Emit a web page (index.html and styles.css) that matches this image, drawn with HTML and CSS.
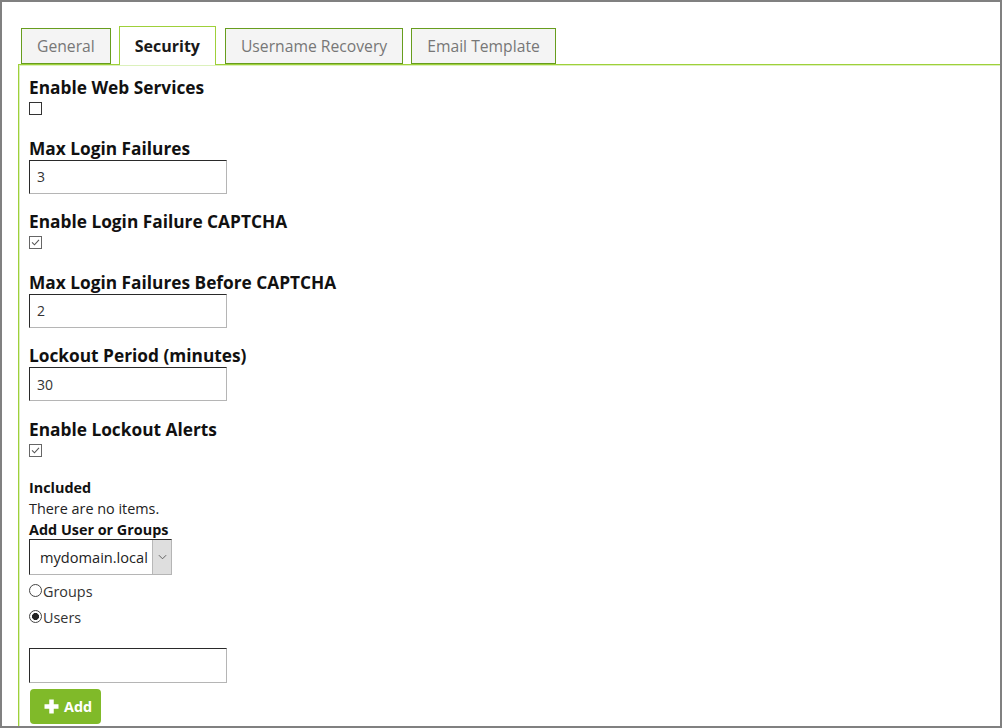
FILE: index.html
```html
<!DOCTYPE html>
<html lang="en">
<head>
<meta charset="utf-8">
<title>Security Settings</title>
<link rel="stylesheet" href="styles.css">
</head>
<body>
<div class="frame">
  <nav class="tabs">
    <a class="tab">General</a>
    <a class="tab active">Security</a>
    <a class="tab">Username Recovery</a>
    <a class="tab">Email Template</a>
  </nav>
  <div class="panel">
    <div class="field">
      <label class="label">Enable Web Services</label>
      <span class="check"></span>
    </div>
    <div class="field">
      <label class="label">Max Login Failures</label>
      <input class="text" type="text" value="3">
    </div>
    <div class="field">
      <label class="label">Enable Login Failure CAPTCHA</label>
      <span class="check checked"><svg viewBox="0 0 13 13"><path d="M2.4 6.4 L5.3 9.2 L10.6 3.3"/></svg></span>
    </div>
    <div class="field">
      <label class="label">Max Login Failures Before CAPTCHA</label>
      <input class="text" type="text" value="2">
    </div>
    <div class="field">
      <label class="label">Lockout Period (minutes)</label>
      <input class="text" type="text" value="30">
    </div>
    <div class="field">
      <label class="label">Enable Lockout Alerts</label>
      <span class="check checked"><svg viewBox="0 0 13 13"><path d="M2.4 6.4 L5.3 9.2 L10.6 3.3"/></svg></span>
    </div>
    <div class="members">
      <div class="small-bold">Included</div>
      <div class="small">There are no items.</div>
      <div class="small-bold">Add User or Groups</div>
      <div class="select">
        <select class="select-input"><option>mydomain.local</option></select>
        <span class="select-arrow"><svg viewBox="0 0 10 6"><path d="M1 1 L5 5 L9 1"/></svg></span>
      </div>
      <label class="radio-row"><input type="radio" name="kind" class="radio">Groups</label>
      <label class="radio-row"><input type="radio" name="kind" class="radio" checked>Users</label>
      <input class="text search" type="text" value="">
      <button class="add-btn"><svg class="plus" viewBox="0 0 17 17"><path d="M8.5 1.5 V15.5 M1.5 8.5 H15.5"/></svg>Add</button>
    </div>
  </div>
</div>
</body>
</html>
```
FILE: styles.css
```css
html, body {
  margin: 0;
  padding: 0;
  background: #fff;
}

.frame {
  width: 1002px;
  height: 728px;
  box-sizing: border-box;
  border: 2px solid #808080;
  overflow: hidden;
  background: #fff;
  font-family: "Open Sans", "Noto Sans", sans-serif;
  color: #1a1a1a;
}

.tabs {
  display: flex;
  align-items: flex-end;
  gap: 8px;
  padding-top: 24px;
  margin-left: 19px;
}

.tab {
  display: block;
  box-sizing: border-box;
  height: 36px;
  line-height: 34px;
  padding: 0 15px;
  border: 1px solid #679d1e;
  background: #f4f4f4;
  color: #777;
  font-size: 15.7px;
  white-space: nowrap;
}

.tab.active {
  position: relative;
  z-index: 1;
  height: 39px;
  padding-top: 2px;
  margin-bottom: -1px;
  border-color: #9fd03a;
  border-bottom: none;
  background: #fff;
  color: #1a1a1a;
  font-weight: 700;
  font-size: 16px;
}

.tab.active + .tab {
  margin-left: 1px;
}

.panel {
  margin-left: 16px;
  border-top: 1px solid #9fd03a;
  border-left: 1px solid #9fd03a;
  box-shadow: inset 1px 1px 0 #dcf1bc;
  padding: 11px 10px 40px;
}

.field {
  display: flex;
  flex-direction: column;
  align-items: flex-start;
  margin-bottom: 16.5px;
}

.label {
  display: block;
  font-size: 17.3px;
  line-height: 23px;
  font-weight: 700;
  color: #111;
}

.check {
  display: block;
  box-sizing: border-box;
  width: 13px;
  height: 13px;
  margin: 3px 0 5px;
  border: 1px solid #333;
  background: #fff;
}

.check.checked {
  border-color: #666;
}

.check svg {
  display: block;
  width: 11px;
  height: 11px;
}

.check svg path {
  fill: none;
  stroke: #555;
  stroke-width: 1.3;
}

.text {
  display: block;
  box-sizing: border-box;
  width: 198px;
  height: 34px;
  margin: 0;
  padding: 0 7px;
  border: 1px solid;
  border-color: #2a2a2a #b5b5b5 #b5b5b5 #2a2a2a;
  font-family: "Open Sans", "Noto Sans", sans-serif;
  font-size: 14px;
  color: #333;
  background: #fff;
  outline: none;
}

.members {
  margin-top: -1px;
}

.small-bold {
  font-size: 14.4px;
  line-height: 21px;
  font-weight: 700;
  color: #111;
}

.small {
  font-size: 14.4px;
  line-height: 21px;
  color: #222;
}

.select {
  display: flex;
  box-sizing: border-box;
  width: 143px;
  height: 36px;
  margin-top: -1px;
  margin-bottom: 4px;
  border: 1px solid;
  border-color: #2a2a2a #b5b5b5 #b5b5b5 #2a2a2a;
  background: #fff;
}

.select-input {
  flex: 1;
  min-width: 0;
  appearance: none;
  -webkit-appearance: none;
  border: none;
  background: transparent;
  padding: 0 0 0 10px;
  margin: 0;
  font-family: "Open Sans", "Noto Sans", sans-serif;
  font-size: 14.6px;
  color: #222;
  outline: none;
}

.select-arrow {
  display: flex;
  align-items: center;
  justify-content: center;
  width: 18px;
  background: #dedede;
  border-left: 1px solid #b8b8b8;
}

.select-arrow svg {
  width: 9px;
  height: 6px;
}

.select-arrow path {
  fill: none;
  stroke: #555;
  stroke-width: 1;
}

.radio-row {
  display: block;
  font-size: 14.4px;
  line-height: 25px;
  color: #333;
}

.radio-row + .radio-row {
  margin-top: 1px;
}

.radio {
  appearance: none;
  -webkit-appearance: none;
  box-sizing: border-box;
  width: 13px;
  height: 13px;
  margin: 0 1px 0 0;
  border: 1px solid #444;
  border-radius: 50%;
  background: #fff;
  vertical-align: baseline;
}

.radio:checked {
  background: radial-gradient(circle, #222 0 3.2px, #fff 3.8px);
}

.search {
  height: 35px;
  margin-top: 18px;
}

.add-btn {
  display: flex;
  align-items: center;
  gap: 4px;
  box-sizing: border-box;
  width: 71px;
  height: 35px;
  margin: 6px 0 0 1px;
  padding: 0 0 0 13px;
  border: none;
  border-radius: 4px;
  background: #80ba29;
  color: #fff;
  font-family: "Open Sans", "Noto Sans", sans-serif;
  font-size: 14.4px;
  font-weight: 700;
}

.plus {
  width: 17px;
  height: 17px;
}

.plus path {
  fill: none;
  stroke: #fff;
  stroke-width: 4.5;
}
```
